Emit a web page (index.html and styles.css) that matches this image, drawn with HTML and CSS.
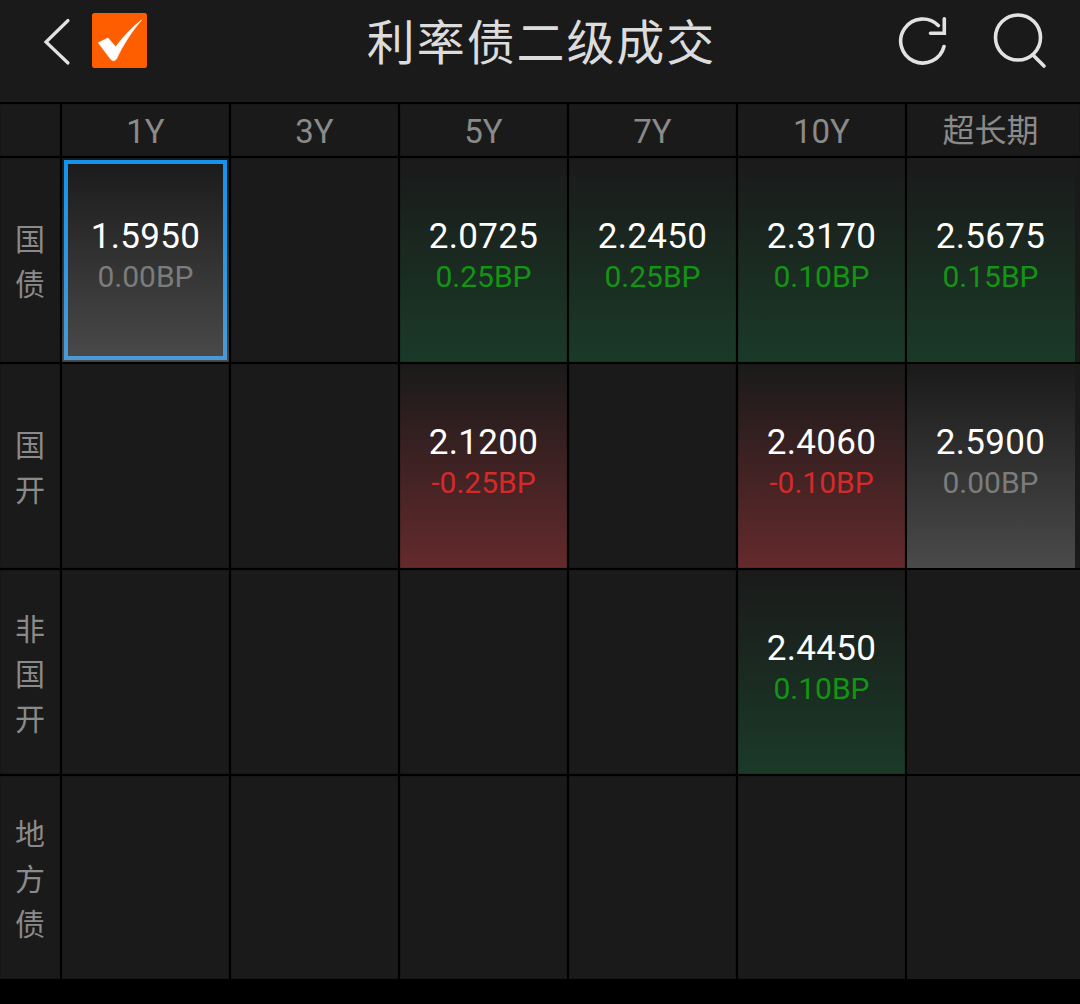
FILE: index.html
```html
<!DOCTYPE html>
<html lang="zh">
<head>
<meta charset="utf-8">
<title>利率债二级成交</title>
<link rel="stylesheet" href="styles.css">
</head>
<body>
<header class="topbar">
  <div class="left-icons">
    <svg class="icon-back" width="30" height="50" viewBox="0 0 30 50"><path d="M25 3.5 L3 25 L25 46" fill="none" stroke="#e2e2e2" stroke-width="3.2" stroke-linecap="round" stroke-linejoin="miter"/></svg>
    <svg class="icon-check" width="55" height="55" viewBox="0 0 55 55"><rect width="55" height="55" rx="2.5" fill="#ff5e00"/><path d="M6.3 29.7 L16 25 L23.7 33.7 C32 23 40 14 49.7 7 C40 18 31 32 24.5 46 Q21.5 49.5 18.5 46 Z" fill="#fff" stroke="#fff" stroke-width=".6" stroke-linejoin="round"/></svg>
  </div>
  <h1 class="title">利率债二级成交</h1>
  <div class="right-icons">
    <svg width="52" height="50" viewBox="0 0 52 50"><path d="M46 29.5 A22 22 0 1 1 40.3 8.5" fill="none" stroke="#e2e2e2" stroke-width="3.6" stroke-linecap="round"/><path d="M46.3 1.8 V16.3 H32.5" fill="none" stroke="#e2e2e2" stroke-width="3.6" stroke-linecap="round" stroke-linejoin="miter"/></svg>
    <svg width="54" height="56" viewBox="0 0 54 56"><circle cx="25" cy="24.5" r="22.5" fill="none" stroke="#e2e2e2" stroke-width="3.6"/><path d="M40 42 L51 53" fill="none" stroke="#e2e2e2" stroke-width="3.6" stroke-linecap="round"/></svg>
  </div>
</header>
<main class="grid">
  <div class="head"></div><div class="head">1Y</div><div class="head">3Y</div><div class="head">5Y</div><div class="head">7Y</div><div class="head">10Y</div><div class="head head-cjk">超长期</div>

  <div class="side"><span>国</span><span>债</span></div>
  <div class="cell flat selected"><b>1.5950</b><i>0.00BP</i></div>
  <div class="cell"></div>
  <div class="cell up"><b>2.0725</b><i>0.25BP</i></div>
  <div class="cell up"><b>2.2450</b><i>0.25BP</i></div>
  <div class="cell up"><b>2.3170</b><i>0.10BP</i></div>
  <div class="cell up last"><b>2.5675</b><i>0.15BP</i></div>

  <div class="side"><span>国</span><span>开</span></div>
  <div class="cell"></div>
  <div class="cell"></div>
  <div class="cell down"><b>2.1200</b><i>-0.25BP</i></div>
  <div class="cell"></div>
  <div class="cell down"><b>2.4060</b><i>-0.10BP</i></div>
  <div class="cell flat last"><b>2.5900</b><i>0.00BP</i></div>

  <div class="side"><span>非</span><span>国</span><span>开</span></div>
  <div class="cell"></div>
  <div class="cell"></div>
  <div class="cell"></div>
  <div class="cell"></div>
  <div class="cell up"><b>2.4450</b><i>0.10BP</i></div>
  <div class="cell last"></div>

  <div class="side"><span>地</span><span>方</span><span>债</span></div>
  <div class="cell"></div>
  <div class="cell"></div>
  <div class="cell"></div>
  <div class="cell"></div>
  <div class="cell"></div>
  <div class="cell last"></div>
</main>
</body>
</html>
```
FILE: styles.css
```css
* { box-sizing: border-box; }
html, body { margin: 0; height: 100%; background: #000; overflow: hidden; }
body { width: 1080px; height: 1004px; font-family: Roboto, "Noto Sans CJK SC", sans-serif; }
.topbar { height: 102px; background: #1a1a1a; display: flex; align-items: flex-start; position: relative; }
.left-icons { display: flex; align-items: flex-start; padding: 17px 0 0 43px; gap: 19px; }
.icon-check { margin-top: -4px; }
.title { position: absolute; left: 0; right: 0; top: 8px; margin: 0; padding-left: 3px; text-align: center; font: 400 48px/62px "Noto Sans CJK SC", sans-serif; letter-spacing: 1.9px; color: #dcdcdc; }
.right-icons { margin-left: auto; display: flex; align-items: flex-start; padding: 13px 33px 0 0; gap: 43px; }
.right-icons svg:first-child { margin-top: 4px; }
.grid { display: grid; grid-template-columns: 60px repeat(6, 167px) 4px; grid-template-rows: 52px 204px 204px 204px 203px; gap: 2px; padding-top: 2px; background: #000; }
.head { background: #1a1a1a; color: #8a8a8a; font-size: 33px; padding-top: 2px; display: flex; align-items: center; justify-content: center; box-shadow: inset 0 0 1px #000; }
.head-cjk { grid-column: span 2; padding: 0 6px 4px 0; font-family: "Noto Sans CJK SC", sans-serif; font-size: 32px; }
.side { background: #1a1a1a; color: #8a8a8a; font: 400 30px/45px "Noto Sans CJK SC", sans-serif; display: flex; flex-direction: column; align-items: center; justify-content: center; box-shadow: inset 0 0 1px #000; }
.cell { position: relative; background: #1a1a1a; display: flex; flex-direction: column; align-items: center; justify-content: center; padding-bottom: 10px; box-shadow: inset 0 0 1px #000; }
.cell b { font-weight: 400; font-size: 35px; line-height: 42px; color: #fff; letter-spacing: .35px; }
.cell i { font-style: normal; font-size: 30px; line-height: 36px; margin-top: 1px; }
.flat { background: linear-gradient(#1a1a1a, #4a4a4a); }
.flat i { color: #7c7c7c; }
.up { background: linear-gradient(#1a1a1a, #1a3a28); }
.up i { color: #149414; }
.down { background: linear-gradient(#1a1a1a, #642a2c); }
.down i { color: #d42a2a; }
.selected::after { content: ""; position: absolute; inset: 2px; border: 4px solid #1b8fe6; border-image: linear-gradient(#1593ec, #4a9ad6) 1; }
.last { grid-column: span 2; padding-right: 6px; box-shadow: none; background-color: #1a1a1a; background-size: 168px 100%; background-repeat: no-repeat; }
```
